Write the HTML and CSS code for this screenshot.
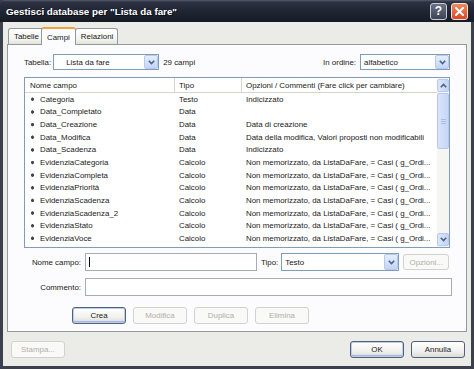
FILE: index.html
```html
<!DOCTYPE html>
<html lang="it">
  <head>
    <meta charset="UTF-8" />
    <title>Gestisci database</title>
    <link rel="stylesheet" href="styles.css">
  </head>
  <body>
    <div class="window">
      <!-- Title bar -->
      <div class="titlebar">
        <span class="title">Gestisci database per "Lista da fare"</span>
        <div class="caption-buttons">
          <span class="cap-btn help">?</span>
          <span class="cap-btn close">
            <svg width="9" height="9" viewBox="0 0 9 9"><path d="M1 1 L8 8 M8 1 L1 8" stroke="#fff" stroke-width="2" stroke-linecap="square"/></svg>
          </span>
        </div>
      </div>

      <div class="client">
        <!-- Tabs -->
        <div class="tabs">
          <span class="tab">Tabelle</span>
          <span class="tab active">Campi</span>
          <span class="tab">Relazioni</span>
        </div>

        <div class="panel">
          <div class="toolbar">
            <span class="lbl">Tabella:</span>
            <div class="combo combo-table">
              <span class="combo-text">Lista da fare</span>
              <span class="combo-btn"><svg width="7" height="5" viewBox="0 0 7 5"><path d="M0.8 0.8 L3.5 3.5 L6.2 0.8" fill="none" stroke="#4d6185" stroke-width="1.6"/></svg></span>
            </div>
            <span class="count">29 campi</span>
            <span class="lbl order-lbl">In ordine:</span>
            <div class="combo combo-order">
              <span class="combo-text">alfabetico</span>
              <span class="combo-btn"><svg width="7" height="5" viewBox="0 0 7 5"><path d="M0.8 0.8 L3.5 3.5 L6.2 0.8" fill="none" stroke="#4d6185" stroke-width="1.6"/></svg></span>
            </div>
          </div>

          <!-- Field list -->
          <div class="listbox">
            <div class="list-main">
              <div class="list-head">
                <span class="col col-name">Nome campo</span>
                <span class="col col-type">Tipo</span>
                <span class="col col-opt">Opzioni / Commenti (Fare click per cambiare)</span>
              </div>
              <div class="row"><span class="col col-name"><i class="dot"></i>Categoria</span><span class="col col-type">Testo</span><span class="col col-opt">Indicizzato</span></div>
              <div class="row"><span class="col col-name"><i class="dot"></i>Data_Completato</span><span class="col col-type">Data</span><span class="col col-opt"></span></div>
              <div class="row"><span class="col col-name"><i class="dot"></i>Data_Creazione</span><span class="col col-type">Data</span><span class="col col-opt">Data di creazione</span></div>
              <div class="row"><span class="col col-name"><i class="dot"></i>Data_Modifica</span><span class="col col-type">Data</span><span class="col col-opt">Data della modifica, Valori proposti non modificabili</span></div>
              <div class="row"><span class="col col-name"><i class="dot"></i>Data_Scadenza</span><span class="col col-type">Data</span><span class="col col-opt">Indicizzato</span></div>
              <div class="row"><span class="col col-name"><i class="dot"></i>EvidenziaCategoria</span><span class="col col-type">Calcolo</span><span class="col col-opt">Non memorizzato, da ListaDaFare, = Casi ( g_Ordi...</span></div>
              <div class="row"><span class="col col-name"><i class="dot"></i>EvidenziaCompleta</span><span class="col col-type">Calcolo</span><span class="col col-opt">Non memorizzato, da ListaDaFare, = Casi ( g_Ordi...</span></div>
              <div class="row"><span class="col col-name"><i class="dot"></i>EvidenziaPriorità</span><span class="col col-type">Calcolo</span><span class="col col-opt">Non memorizzato, da ListaDaFare, = Casi ( g_Ordi...</span></div>
              <div class="row"><span class="col col-name"><i class="dot"></i>EvidenziaScadenza</span><span class="col col-type">Calcolo</span><span class="col col-opt">Non memorizzato, da ListaDaFare, = Casi ( g_Ordi...</span></div>
              <div class="row"><span class="col col-name"><i class="dot"></i>EvidenziaScadenza_2</span><span class="col col-type">Calcolo</span><span class="col col-opt">Non memorizzato, da ListaDaFare, = Casi ( g_Ordi...</span></div>
              <div class="row"><span class="col col-name"><i class="dot"></i>EvidenziaStato</span><span class="col col-type">Calcolo</span><span class="col col-opt">Non memorizzato, da ListaDaFare, = Casi ( g_Ordi...</span></div>
              <div class="row"><span class="col col-name"><i class="dot"></i>EvidenziaVoce</span><span class="col col-type">Calcolo</span><span class="col col-opt">Non memorizzato, da ListaDaFare, = Casi ( g_Ordi...</span></div>
            </div>
            <div class="scrollbar">
              <span class="sb-btn"><svg width="7" height="5" viewBox="0 0 7 5"><path d="M0.8 4.2 L3.5 1.5 L6.2 4.2" fill="none" stroke="#4d6185" stroke-width="1.6"/></svg></span>
              <span class="sb-thumb"><i class="grip"></i></span>
              <span class="sb-track"></span>
              <span class="sb-btn"><svg width="7" height="5" viewBox="0 0 7 5"><path d="M0.8 0.8 L3.5 3.5 L6.2 0.8" fill="none" stroke="#4d6185" stroke-width="1.6"/></svg></span>
            </div>
          </div>

          <!-- Edit form -->
          <div class="form-row">
            <span class="form-lbl">Nome campo:</span>
            <div class="input input-name"><i class="caret"></i></div>
            <span class="lbl type-lbl">Tipo:</span>
            <div class="combo combo-type">
              <span class="combo-text">Testo</span>
              <span class="combo-btn"><svg width="7" height="5" viewBox="0 0 7 5"><path d="M0.8 0.8 L3.5 3.5 L6.2 0.8" fill="none" stroke="#4d6185" stroke-width="1.6"/></svg></span>
            </div>
            <span class="btn disabled btn-opt">Opzioni...</span>
          </div>
          <div class="form-row comment-row">
            <span class="form-lbl">Commento:</span>
            <div class="input input-comment"></div>
          </div>
          <div class="actions">
            <span class="btn default">Crea</span>
            <span class="btn disabled">Modifica</span>
            <span class="btn disabled">Duplica</span>
            <span class="btn disabled">Elimina</span>
          </div>
        </div>

        <div class="footer">
          <span class="btn disabled">Stampa...</span>
          <span class="spacer"></span>
          <span class="btn default">OK</span>
          <span class="btn">Annulla</span>
        </div>
      </div>
    </div>
  </body>
</html>
```

FILE: styles.css
```css
body {
  margin: 0;
  padding: 0;
  overflow: hidden;
  font-family: "Liberation Sans", Arial, sans-serif;
  font-size: 7.9px;
  color: #1a1a1a;
}

.window {
  width: 474px;
  height: 369px;
  box-sizing: border-box;
  padding: 0 3px 3px;
  background: #3b404c;
  display: flex;
  flex-direction: column;
}

/* Title bar */
.titlebar {
  height: 22px;
  margin: 0 -3px;
  padding: 0 6px 0 6px;
  display: flex;
  align-items: center;
  background: linear-gradient(#555c6b 0, #2c3242 2px, #1f2432 12px, #171b25 100%);
  border-radius: 5px 5px 0 0;
}

.title {
  color: #fff;
  font-weight: bold;
  font-size: 9.8px;
  text-shadow: 1px 1px 0 #0c0e14;
}

.caption-buttons {
  margin-left: auto;
  display: flex;
  gap: 4px;
}

.cap-btn {
  width: 15px;
  height: 15px;
  border: 1px solid #c8ccd6;
  border-radius: 3px;
  display: flex;
  align-items: center;
  justify-content: center;
  color: #fff;
  font-weight: bold;
  font-size: 12px;
}

.cap-btn.help {
  background: linear-gradient(#6b7386, #3b4256);
}

.cap-btn.close {
  background: linear-gradient(#f08a5e, #d9482a);
  border-color: #f4e2dc;
}

/* Client area */
.client {
  flex: 1;
  background: #ebebe8;
  padding: 0 4px;
  display: flex;
  flex-direction: column;
}

.tabs {
  height: 18px;
  padding: 4px 0 0 1px;
  display: flex;
  align-items: flex-end;
  position: relative;
  z-index: 1;
}

.tab {
  height: 15px;
  padding: 0 4px 0 5px;
  display: flex;
  align-items: center;
  border: 1px solid #919b9c;
  border-bottom: none;
  border-radius: 3px 3px 0 0;
  background: linear-gradient(#ffffff, #f3f3ef 70%, #e2e2da);
  margin-right: -1px;
}

.tab.active {
  height: 18px;
  padding: 0 5px;
  margin: 0 -1px -1px -2px;
  background: #fcfcfe;
  border-top: 2px solid #f2a23c;
  box-sizing: border-box;
}

.panel {
  height: 288px;
  box-sizing: border-box;
  border: 1px solid #919b9c;
  background: #fcfcfe;
  padding: 9px 16px 0;
  display: flex;
  flex-direction: column;
}

.toolbar {
  height: 16px;
  display: flex;
  align-items: center;
}

.lbl {
  white-space: nowrap;
}

.combo {
  height: 16px;
  box-sizing: border-box;
  border: 1px solid #7f9db9;
  background: #fff;
  display: flex;
  align-items: center;
}

.combo-text {
  flex: 1;
  padding-left: 3px;
}

.combo-btn {
  width: 14px;
  height: 14px;
  box-sizing: border-box;
  border: 1px solid #b7c9ef;
  border-radius: 2px;
  background: linear-gradient(#e6eeff, #c4d4f5);
  display: flex;
  align-items: center;
  justify-content: center;
}

.combo-table {
  width: 106px;
  margin-left: 2px;
}

.combo-table .combo-text {
  padding-left: 12px;
}

.count {
  margin-left: 4px;
}

.order-lbl {
  margin-left: auto;
  margin-right: 4px;
}

.combo-order {
  width: 90px;
}

/* List */
.listbox {
  margin-top: 7px;
  height: 171px;
  box-sizing: border-box;
  border: 1px solid #7f9db9;
  background: #fff;
  display: flex;
}

.list-main {
  flex: 1;
  overflow: hidden;
}

.list-head {
  height: 15px;
  box-sizing: border-box;
  border-bottom: 1px solid #d5d5d0;
  display: flex;
  align-items: center;
}

.list-head .col {
  height: 15px;
  display: flex;
  align-items: center;
  border-right: 1px solid #d5d5d0;
  box-sizing: border-box;
}

.list-head .col-name {
  padding-left: 5px;
}

.list-head .col-opt {
  border-right: none;
}

.row {
  height: 12.65px;
  display: flex;
  align-items: center;
  white-space: nowrap;
}

.col {
  padding-left: 4px;
  overflow: hidden;
  white-space: nowrap;
}

.col-name {
  width: 150px;
  flex: none;
  box-sizing: border-box;
  display: flex;
  align-items: center;
}

.row .col-name {
  padding-left: 6px;
}

.col-type {
  width: 67px;
  flex: none;
  box-sizing: border-box;
}

.col-opt {
  flex: 1;
}

.dot {
  width: 3px;
  height: 4px;
  margin-right: 6px;
  background: #444;
  clip-path: polygon(50% 0, 100% 30%, 100% 70%, 50% 100%, 0 70%, 0 30%);
}

.scrollbar {
  width: 12px;
  display: flex;
  flex-direction: column;
  background: #f5f5f1;
}

.sb-btn {
  height: 13px;
  box-sizing: border-box;
  border: 1px solid #b7c9ef;
  border-radius: 2px;
  background: linear-gradient(90deg, #dbe6fc, #c4d4f5);
  display: flex;
  align-items: center;
  justify-content: center;
  margin: 1px 0;
}

.sb-thumb {
  height: 56px;
  box-sizing: border-box;
  border: 1px solid #b7c9ef;
  border-radius: 2px;
  background: linear-gradient(90deg, #d8e4fc, #c6d6f6);
  display: flex;
  align-items: center;
  justify-content: center;
}

.grip {
  width: 5px;
  height: 5px;
  background: repeating-linear-gradient(#a9bce4 0 1px, transparent 1px 2px);
}

.sb-track {
  flex: 1;
}

/* Form */
.form-row {
  margin-top: 5px;
  height: 18px;
  display: flex;
  align-items: center;
}

.comment-row {
  margin-top: 7px;
}

.form-lbl {
  width: 57px;
  text-align: right;
  margin-right: 4px;
  flex: none;
}

.input {
  height: 18px;
  box-sizing: border-box;
  border: 1px solid #a5acb5;
  background: #fff;
  display: flex;
  align-items: center;
}

.input-name {
  width: 172px;
}

.caret {
  width: 1px;
  height: 10px;
  margin-left: 3px;
  background: #000;
}

.type-lbl {
  margin-left: 4px;
  margin-right: 3px;
}

.combo-type {
  width: 118px;
  height: 18px;
}

.combo-type .combo-btn {
  height: 16px;
}

.input-comment {
  flex: 1;
  margin-right: -2px;
}

.btn {
  width: 54px;
  height: 17px;
  box-sizing: border-box;
  border: 1px solid #54607a;
  border-radius: 3px;
  background: linear-gradient(#ffffff, #f1f1ee 60%, #dcdcd6);
  display: flex;
  align-items: center;
  justify-content: center;
  flex: none;
}

.btn.default {
  box-shadow: inset 0 0 0 1px #bccdf0, inset 0 -1px 0 1px #9fb5e2;
}

.btn.disabled {
  border-color: #d2d2cc;
  color: #b0afa8;
  background: #f9f9f7;
}

.btn-opt {
  width: 46px;
  height: 16px;
  margin-left: 4px;
}

.actions {
  margin-top: 11px;
  padding-left: 48px;
  display: flex;
  gap: 7px;
}

.footer {
  padding: 9px 2px 0 4px;
  display: flex;
  align-items: center;
  gap: 7px;
}

.spacer {
  flex: 1;
}
```
